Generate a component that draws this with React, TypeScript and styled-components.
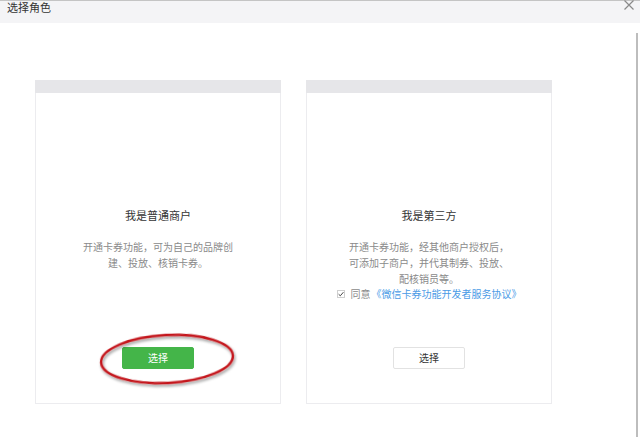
import styled, { createGlobalStyle } from 'styled-components';

const GlobalStyle = createGlobalStyle`
  html, body {
    margin: 0;
    padding: 0;
    background: #fff;
  }
  body {
    font-family: "Noto Sans CJK SC", "Noto Sans", sans-serif;
  }
`;

const Dialog = styled.div`
  width: 640px;
  height: 437px;
  display: flex;
  flex-direction: column;
  background: #fff;
  overflow: hidden;
`;

const Header = styled.div`
  height: 22px;
  flex-shrink: 0;
  border-top: 1px solid #c4c4c4;
  background: #f4f4f6;
  display: flex;
  justify-content: space-between;
  align-items: flex-start;
  padding: 0 6px 0 7px;
`;

const Title = styled.div`
  font-size: 11px;
  line-height: 13px;
  color: #333;
`;

const Close = styled.div`
  width: 10px;
  height: 10px;
  margin-top: -1px;
  display: flex;
`;

const Body = styled.div`
  flex: 1;
  display: flex;
`;

const Content = styled.div`
  flex: 1;
  display: flex;
  gap: 25px;
  padding: 57px 0 0 35px;
`;

const Scrollbar = styled.div`
  width: 2px;
  margin-top: 10px;
  margin-right: 2px;
  background: #bdbdbd;
`;

const Card = styled.div`
  width: 246px;
  height: 324px;
  box-sizing: border-box;
  border: 1px solid #ececef;
  border-top: none;
  display: flex;
  flex-direction: column;
  background: #fff;
`;

const CardTop = styled.div`
  height: 13px;
  margin: 0 -1px;
  background: #e6e6e9;
`;

const CardContent = styled.div`
  flex: 1;
  padding-top: 114px;
  text-align: center;
`;

const Name = styled.div`
  font-size: 11px;
  line-height: 16px;
  color: #353535;
`;

const Desc = styled.div`
  margin-top: 16px;
  font-size: 10px;
  line-height: 16px;
  color: #8a8a8a;
`;

const Agree = styled.div`
  display: flex;
  justify-content: center;
  align-items: center;
  font-size: 10px;
  line-height: 14px;
  color: #8a8a8a;
`;

const Check = styled.span`
  width: 6px;
  height: 6px;
  border: 1px solid #cfcfcf;
  margin-right: 6px;
  display: flex;
  align-items: center;
  justify-content: center;
`;

const Link = styled.span`
  color: #4a9be6;
  margin-left: 1px;
`;

const ButtonRow = styled.div`
  position: relative;
  display: flex;
  justify-content: center;
  padding-bottom: 34px;
`;

const Button = styled.div<{ $primary?: boolean }>`
  width: 72px;
  height: 22px;
  box-sizing: border-box;
  border-radius: 2px;
  border: 1px solid ${(p) => (p.$primary ? '#44b549' : '#e2e2e2')};
  background: ${(p) => (p.$primary ? '#44b549' : '#fff')};
  color: ${(p) => (p.$primary ? '#fff' : '#353535')};
  font-size: 10px;
  line-height: 20px;
  text-align: center;
`;

const Circle = styled.svg`
  position: absolute;
  left: 61px;
  top: -15px;
  overflow: visible;
  pointer-events: none;
`;

export default function App() {
  return (
    <>
      <GlobalStyle />
      <Dialog>
        <Header>
          <Title>选择角色</Title>
          <Close>
            <svg width="10" height="10" viewBox="0 0 10 10">
              <path d="M0.5 0.5 L9.5 9.5 M9.5 0.5 L0.5 9.5" stroke="#8a8a8a" strokeWidth="1.2" fill="none" />
            </svg>
          </Close>
        </Header>
        <Body>
          <Content>
            <Card>
              <CardTop />
              <CardContent>
                <Name>我是普通商户</Name>
                <Desc>
                  开通卡券功能，可为自己的品牌创
                  <br />
                  建、投放、核销卡券。
                </Desc>
              </CardContent>
              <ButtonRow>
                <Button $primary>选择</Button>
                <Circle width="140" height="54" viewBox="0 0 140 54">
                  <defs>
                    <filter id="sh" x="-20%" y="-40%" width="140%" height="180%">
                      <feGaussianBlur in="SourceAlpha" stdDeviation="1.5" />
                      <feOffset dx="1" dy="2" result="b" />
                      <feComponentTransfer>
                        <feFuncA type="linear" slope="0.45" />
                      </feComponentTransfer>
                      <feMerge>
                        <feMergeNode />
                        <feMergeNode in="SourceGraphic" />
                      </feMerge>
                    </filter>
                  </defs>
                  <ellipse
                    cx="70"
                    cy="27"
                    rx="66"
                    ry="24"
                    transform="rotate(-3 70 27)"
                    fill="none"
                    stroke="#c4161c"
                    strokeWidth="2.4"
                    filter="url(#sh)"
                  />
                </Circle>
              </ButtonRow>
            </Card>
            <Card>
              <CardTop />
              <CardContent>
                <Name>我是第三方</Name>
                <Desc>
                  开通卡券功能，经其他商户授权后，
                  <br />
                  可添加子商户，并代其制券、投放、
                  <br />
                  配核销员等。
                </Desc>
                <Agree>
                  <Check>
                    <svg width="6" height="6" viewBox="0 0 6 6">
                      <path d="M0.6 3.2 L2.3 4.8 L5.4 1.2" stroke="#444" strokeWidth="1" fill="none" />
                    </svg>
                  </Check>
                  同意<Link>《微信卡券功能开发者服务协议》</Link>
                </Agree>
              </CardContent>
              <ButtonRow>
                <Button>选择</Button>
              </ButtonRow>
            </Card>
          </Content>
          <Scrollbar />
        </Body>
      </Dialog>
    </>
  );
}
